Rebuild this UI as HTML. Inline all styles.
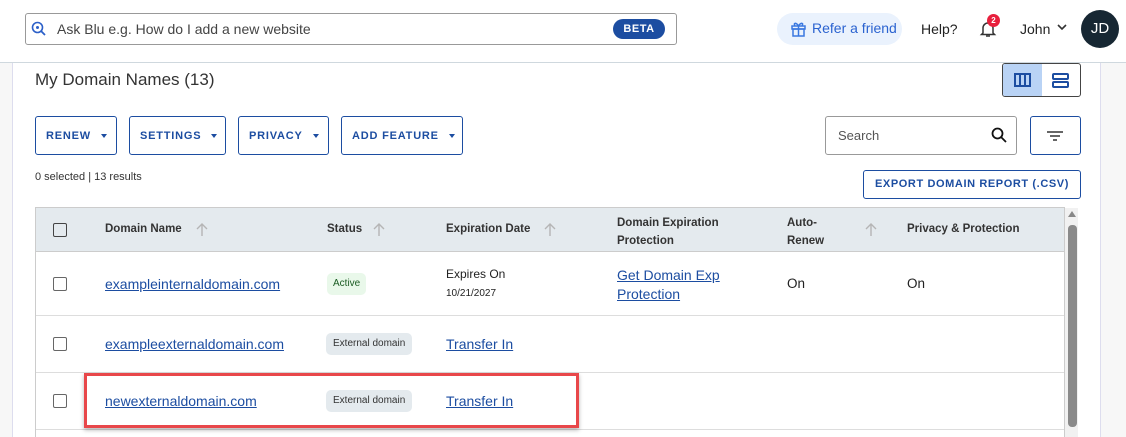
<!DOCTYPE html>
<html><head><style>
*{box-sizing:border-box;margin:0;padding:0}
body{width:1126px;height:437px;overflow:hidden;background:#fff;font-family:"Liberation Sans",sans-serif;color:#222;position:relative}
.a{position:absolute}
.btn{position:absolute;top:116px;height:39px;border:1px solid #1c4da1;border-radius:3px;color:#1c4da1;font-weight:bold;font-size:11px;letter-spacing:.8px;display:flex;align-items:center;padding-left:10px;white-space:nowrap}
.btn:after{content:"";border-left:3px solid transparent;border-right:3px solid transparent;border-top:4px solid #1c4da1;margin-left:10px}
.th{position:absolute;font-size:11.5px;font-weight:bold;color:#333}
.lnk{position:absolute;color:#1c4da1;text-decoration:underline;font-size:14px}
.cb{position:absolute;left:53px;width:14px;height:14px;border:1.5px solid #666;border-radius:2px}
.pill{position:absolute;left:326px;height:22px;background:#e4eaee;border-radius:5px;font-size:10px;padding:0 7px;line-height:22px;color:#333}
.line{position:absolute;left:36px;width:1028px;height:1px;background:#ddd}
.ar{position:absolute}
</style></head><body>
<div class="a" style="left:0;top:63px;width:13px;height:374px;background:#f7f7f7;border-right:1px solid #dde"></div>
<div class="a" style="left:1100px;top:63px;width:26px;height:374px;background:#f7f7f7;border-left:1px solid #dde"></div>
<div class="a" style="left:0;top:62px;width:1126px;height:1px;background:#cfd8de"></div>
<div class="a" style="left:25px;top:13px;width:652px;height:32px;border:1px solid #999;border-radius:3px"></div>
<svg class="a" style="left:31px;top:21px" width="16" height="16" viewBox="0 0 16 16"><circle cx="6.5" cy="6.5" r="5" fill="none" stroke="#2b5fc8" stroke-width="1.6"/><line x1="10" y1="10" x2="14" y2="14" stroke="#2b5fc8" stroke-width="1.8"/><circle cx="6.5" cy="6.5" r="1.5" fill="#2b5fc8"/></svg>
<div class="a" style="left:57px;top:21px;font-size:14px;color:#444">Ask Blu e.g. How do I add a new website</div>
<div class="a" style="left:613px;top:19px;width:52px;height:20px;background:#1c4da1;border-radius:10px;color:#fff;font-weight:bold;font-size:11px;text-align:center;line-height:20px;letter-spacing:.5px">BETA</div>
<div class="a" style="left:777px;top:13px;width:125px;height:32px;background:#eaf2fd;border-radius:16px"></div>
<svg class="a" style="left:790px;top:20px" width="17" height="17" viewBox="0 0 17 17" fill="none" stroke="#3a78e0" stroke-width="1.5"><rect x="2" y="6" width="13" height="3"/><rect x="3" y="9" width="11" height="7"/><line x1="8.5" y1="6" x2="8.5" y2="16"/><path d="M8.5 6C6 2 3 3 5 5.5M8.5 6c2.5-4 5.5-3 3.5-.5"/></svg>
<div class="a" style="left:812px;top:20px;font-size:14px;color:#2b63d0">Refer a friend</div>
<div class="a" style="left:921px;top:21px;font-size:14px;color:#222">Help?</div>
<svg class="a" style="left:979px;top:20px" width="18" height="18" viewBox="0 0 18 18" fill="none" stroke="#333" stroke-width="1.5"><path d="M4 13V8a5 5 0 0 1 10 0v5l1.5 1.5h-13z"/><path d="M7 16h4"/></svg>
<div class="a" style="left:987px;top:14px;width:13px;height:13px;border-radius:50%;background:#e8203d;color:#fff;font-size:8px;font-weight:bold;text-align:center;line-height:13px">2</div>
<div class="a" style="left:1020px;top:21px;font-size:14px;color:#222">John</div>
<svg class="a" style="left:1057px;top:24px" width="10" height="7"><path d="M1 1l4 4 4-4" fill="none" stroke="#333" stroke-width="1.6"/></svg>
<div class="a" style="left:1081px;top:10px;width:38px;height:38px;border-radius:50%;background:#172733;color:#fff;font-size:15px;text-align:center;line-height:38px">JD</div>
<div class="a" style="left:35px;top:70px;font-size:17px;color:#333">My Domain Names (13)</div>
<div class="a" style="left:1002px;top:63px;width:79px;height:34px;border:1px solid #444;border-radius:3px;overflow:hidden"><div style="width:39px;height:100%;background:#b9d3f5"></div></div>
<svg class="a" style="left:1014px;top:73px" width="17" height="14" fill="none" stroke="#1c4da1" stroke-width="2"><rect x="1" y="1" width="15" height="12"/><line x1="6" y1="1" x2="6" y2="13"/><line x1="11" y1="1" x2="11" y2="13"/></svg>
<svg class="a" style="left:1052px;top:73px" width="17" height="15" fill="none" stroke="#1c4da1" stroke-width="2"><rect x="1" y="1" width="15" height="5" rx="1"/><rect x="1" y="9" width="15" height="5" rx="1"/></svg>
<div class="btn" style="left:35px;width:82px">RENEW</div>
<div class="btn" style="left:129px;width:97px">SETTINGS</div>
<div class="btn" style="left:238px;width:91px">PRIVACY</div>
<div class="btn" style="left:341px;width:122px">ADD FEATURE</div>
<div class="a" style="left:825px;top:116px;width:192px;height:39px;border:1px solid #999;border-radius:3px"></div>
<div class="a" style="left:838px;top:128px;font-size:13px;color:#555">Search</div>
<svg class="a" style="left:991px;top:127px" width="16" height="16" fill="none" stroke="#111" stroke-width="1.8"><circle cx="6.5" cy="6.5" r="5"/><line x1="10" y1="10" x2="15" y2="15"/></svg>
<div class="a" style="left:1030px;top:116px;width:51px;height:39px;border:1px solid #1c4da1;border-radius:3px"></div>
<svg class="a" style="left:1046px;top:130px" width="18" height="12" stroke="#333" stroke-width="1.5"><line x1="1" y1="2" x2="17" y2="2"/><line x1="4" y1="6" x2="14" y2="6"/><line x1="7" y1="10" x2="11" y2="10"/></svg>
<div class="a" style="left:35px;top:171px;font-size:11px;color:#333">0 selected | 13 results</div>
<div class="a" style="left:863px;top:170px;width:218px;height:29px;border:1px solid #1c4da1;border-radius:3px;color:#1c4da1;font-weight:bold;font-size:11px;letter-spacing:.6px;text-align:center;line-height:27px;white-space:nowrap">EXPORT DOMAIN REPORT (.CSV)</div>
<div class="a" style="left:35px;top:207px;width:1030px;height:230px;border:1px solid #ccc;border-bottom:none"></div>
<div class="a" style="left:36px;top:208px;width:1028px;height:44px;background:#e4eaee;border-bottom:1px solid #ccc"></div>
<div class="cb" style="top:223px;border-color:#444"></div>
<div class="th" style="left:105px;top:223px">Domain Name</div>
<div class="th" style="left:327px;top:223px">Status</div>
<div class="th" style="left:446px;top:223px">Expiration Date</div>
<div class="th" style="left:617px;top:214px;line-height:18px">Domain Expiration<br>Protection</div>
<div class="th" style="left:787px;top:214px;line-height:18px">Auto-<br>Renew</div>
<div class="th" style="left:907px;top:223px">Privacy &amp; Protection</div>
<svg class="ar" style="left:195px;top:222px" width="14" height="15" fill="none" stroke="#b5b5b5" stroke-width="1.4"><path d="M7 14V2M2 7l5-5 5 5"/></svg>
<svg class="ar" style="left:372px;top:222px" width="14" height="15" fill="none" stroke="#b5b5b5" stroke-width="1.4"><path d="M7 14V2M2 7l5-5 5 5"/></svg>
<svg class="ar" style="left:543px;top:222px" width="14" height="15" fill="none" stroke="#b5b5b5" stroke-width="1.4"><path d="M7 14V2M2 7l5-5 5 5"/></svg>
<svg class="ar" style="left:864px;top:222px" width="14" height="15" fill="none" stroke="#b5b5b5" stroke-width="1.4"><path d="M7 14V2M2 7l5-5 5 5"/></svg>
<div class="a" style="left:1065px;top:208px;width:13px;height:229px;background:#f1f1f1"></div>
<div class="a" style="left:1068px;top:211px;border-left:4px solid transparent;border-right:4px solid transparent;border-bottom:6px solid #888"></div>
<div class="a" style="left:1068px;top:225px;width:9px;height:202px;border-radius:4px;background:#8a8a8a"></div>
<div class="cb" style="top:277px"></div>
<div class="lnk" style="left:105px;top:276px">exampleinternaldomain.com</div>
<div class="a" style="left:327px;top:273px;height:22px;background:#e9f8ea;border-radius:5px;font-size:10px;padding:0 6px;line-height:22px;color:#1a5c22">Active</div>
<div class="a" style="left:446px;top:267px;font-size:12px">Expires On</div>
<div class="a" style="left:446px;top:288px;font-size:10px">10/21/2027</div>
<div class="lnk" style="left:617px;top:266px;line-height:19px">Get Domain Exp<br>Protection</div>
<div class="a" style="left:787px;top:276px;font-size:13.5px">On</div>
<div class="a" style="left:907px;top:276px;font-size:13.5px">On</div>
<div class="line" style="top:315px"></div>
<div class="cb" style="top:337px"></div>
<div class="lnk" style="left:105px;top:336px">exampleexternaldomain.com</div>
<div class="pill" style="top:333px">External domain</div>
<div class="lnk" style="left:446px;top:336px">Transfer In</div>
<div class="line" style="top:372px"></div>
<div class="cb" style="top:394px"></div>
<div class="lnk" style="left:105px;top:393px">newexternaldomain.com</div>
<div class="pill" style="top:390px">External domain</div>
<div class="lnk" style="left:446px;top:393px">Transfer In</div>
<div class="line" style="top:429px"></div>
<div class="a" style="left:84px;top:373px;width:495px;height:55px;border:3px solid #e8474a;box-shadow:0 2px 4px rgba(0,0,0,.3)"></div>
</body></html>
